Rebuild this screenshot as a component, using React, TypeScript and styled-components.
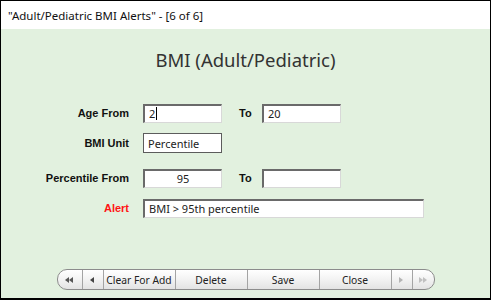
import React from "react";
import styled, { createGlobalStyle } from "styled-components";

const Global = createGlobalStyle`
  html, body { margin: 0; padding: 0; background: #ffffff; }
  body { font-family: "Open Sans", "Noto Sans", sans-serif; }
  * { box-sizing: border-box; }
`;

const Window = styled.div`
  width: 491px;
  height: 300px;
  border-top: 1px solid #000;
  border-left: 1px solid #000;
  border-right: 1px solid #000;
  border-bottom: 2px solid #000;
  display: flex;
  flex-direction: column;
  background: #e2f1df;
  overflow: hidden;
`;

const TitleBar = styled.div`
  height: 28px;
  flex: none;
  background: #ffffff;
  padding-left: 7px;
  display: flex;
  align-items: center;
  font-family: "Noto Sans", sans-serif;
  font-size: 11.5px;
  color: #111;
`;

const Body = styled.div`
  flex: 1;
  display: flex;
  flex-direction: column;
  align-items: stretch;
`;

const Heading = styled.h1`
  margin: 19px 0 0 0;
  text-align: center;
  font-family: "Noto Sans", sans-serif;
  font-weight: 400;
  font-size: 18.5px;
  line-height: 24px;
  color: #333;
`;

const Form = styled.div`
  margin-top: 31px;
  display: flex;
  flex-direction: column;
`;

const Row = styled.div<{ $space: number }>`
  display: flex;
  align-items: center;
  height: 20px;
  margin-top: ${(p) => p.$space}px;
`;

const Label = styled.div<{ $alert?: boolean }>`
  width: 128px;
  margin-right: 14px;
  text-align: right;
  font-family: "Liberation Sans", Arial, sans-serif;
  font-weight: 700;
  font-size: 11px;
  color: ${(p) => (p.$alert ? "#ff1414" : "#111")};
`;

const ToLabel = styled.div`
  width: 40px;
  padding-left: 17px;
  font-family: "Liberation Sans", Arial, sans-serif;
  font-weight: 700;
  font-size: 11px;
  color: #111;
`;

const Field = styled.div<{ $w: number; $flat?: boolean; $center?: boolean }>`
  width: ${(p) => p.$w}px;
  height: ${(p) => (p.$flat ? 20 : 19)}px;
  background: #fff;
  display: flex;
  align-items: center;
  justify-content: ${(p) => (p.$center ? "center" : "flex-start")};
  padding: 0 4px;
  font-family: "Noto Sans", sans-serif;
  font-size: 11px;
  color: #222;
  white-space: nowrap;
  ${(p) =>
    p.$flat
      ? "border: 1px solid #5c5c5c;"
      : `border-top: 2px solid #6a6a6a;
         border-left: 2px solid #6a6a6a;
         border-right: 1px solid #d8d8d8;
         border-bottom: 1px solid #d8d8d8;`}
`;

const Caret = styled.span`
  display: inline-block;
  width: 1px;
  height: 13px;
  background: #000;
  margin-left: 1px;
`;

const Footer = styled.div`
  margin-top: auto;
  margin-bottom: 8px;
  display: flex;
  justify-content: center;
`;

const Toolbar = styled.div`
  display: flex;
  height: 21px;
  border: 1px solid #8c8c8c;
  border-radius: 10px;
  overflow: hidden;
  background: linear-gradient(#ffffff 0%, #f4f4f4 45%, #e3e3e3 100%);
`;

const Seg = styled.div<{ $w: number }>`
  width: ${(p) => p.$w}px;
  display: flex;
  align-items: center;
  justify-content: center;
  font-family: "Noto Sans", sans-serif;
  font-size: 10.3px;
  color: #222;
  & + & {
    border-left: 1px solid #a4a4a4;
  }
`;

const Arrow = ({ dir, n, color }: { dir: "l" | "r"; n: number; color: string }) => {
  const w = n === 2 ? 9 : 5;
  const tri = (x: number) =>
    dir === "l" ? `M${x + 4} 0 L${x} 3 L${x + 4} 6 Z` : `M${x} 0 L${x + 4} 3 L${x} 6 Z`;
  return (
    <svg width={w} height={6} viewBox={`0 0 ${w} 6`}>
      <path d={tri(0)} fill={color} />
      {n === 2 && <path d={tri(4)} fill={color} />}
    </svg>
  );
};

export default function App() {
  return (
    <>
      <Global />
      <Window>
        <TitleBar>"Adult/Pediatric BMI Alerts" - [6 of 6]</TitleBar>
        <Body>
          <Heading>BMI (Adult/Pediatric)</Heading>
          <Form>
            <Row $space={0}>
              <Label>Age From</Label>
              <Field $w={79}>
                2<Caret />
              </Field>
              <ToLabel>To</ToLabel>
              <Field $w={79}>20</Field>
            </Row>
            <Row $space={10}>
              <Label>BMI Unit</Label>
              <Field $w={79} $flat>
                Percentile
              </Field>
            </Row>
            <Row $space={15}>
              <Label>Percentile From</Label>
              <Field $w={79} $center>
                95
              </Field>
              <ToLabel>To</ToLabel>
              <Field $w={79} />
            </Row>
            <Row $space={10}>
              <Label $alert>Alert</Label>
              <Field $w={281}>BMI &gt; 95th percentile</Field>
            </Row>
          </Form>
          <Footer>
            <Toolbar>
              <Seg $w={24}>
                <Arrow dir="l" n={2} color="#555" />
              </Seg>
              <Seg $w={21}>
                <Arrow dir="l" n={1} color="#444" />
              </Seg>
              <Seg $w={72}>Clear For Add</Seg>
              <Seg $w={72}>Delete</Seg>
              <Seg $w={72}>Save</Seg>
              <Seg $w={72}>Close</Seg>
              <Seg $w={21}>
                <Arrow dir="r" n={1} color="#b4b4b4" />
              </Seg>
              <Seg $w={22}>
                <Arrow dir="r" n={2} color="#c0c0c0" />
              </Seg>
            </Toolbar>
          </Footer>
        </Body>
      </Window>
    </>
  );
}
